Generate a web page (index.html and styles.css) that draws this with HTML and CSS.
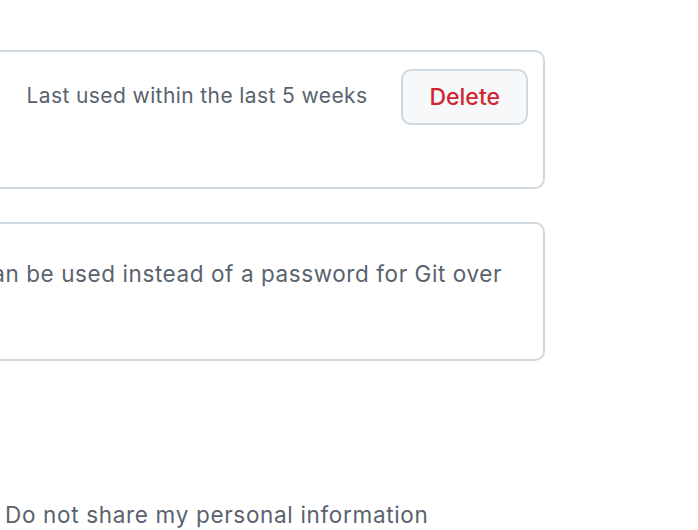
FILE: index.html
```html
<!DOCTYPE html>
<html lang="en">
<head>
<meta charset="utf-8">
<title>Personal access tokens</title>
<link rel="stylesheet" href="styles.css">
</head>
<body>
<main class="page">
  <section class="box token">
    <div class="token-main">
      <a class="token-name" href="#">deploy-token</a>
      <span class="token-scopes">— repo, workflow</span>
    </div>
    <div class="token-meta">
      <span class="last-used">Last used within the last 5 weeks</span>
      <button class="btn-danger" type="button">Delete</button>
    </div>
  </section>
  <section class="box info">
    <p>Personal access tokens (classic) function like ordinary OAuth access tokens. They can be used instead of a password for Git over HTTPS, or can be used to authenticate to the API over Basic Authentication.</p>
  </section>
</main>
<footer class="footer">
  <a class="footer-link" href="#">Do not share my personal information</a>
</footer>
</body>
</html>
```
FILE: styles.css
```css
html, body {
  margin: 0;
  padding: 0;
  background: #ffffff;
  overflow: hidden;
}

body {
  font-family: Inter, "Noto Sans", "Liberation Sans", sans-serif;
  color: #59636e;
}

.page {
  width: 1523px;
  margin-left: -978px;
  padding-top: 50px;
}

.box {
  box-sizing: border-box;
  height: 139px;
  border: 2px solid #d1d9e0;
  border-radius: 10px;
  background: #ffffff;
}

.token {
  display: flex;
  justify-content: space-between;
  align-items: flex-start;
  padding: 17px 15px 15px 27px;
}

.token-main {
  padding-top: 12px;
  font-size: 22px;
  line-height: 30px;
}

.token-name {
  color: #0969da;
  font-weight: 600;
  text-decoration: none;
}

.token-meta {
  display: flex;
  align-items: flex-start;
  gap: 34px;
}

.last-used {
  margin-top: 12px;
  font-size: 21px;
  letter-spacing: 0.4px;
  line-height: 30px;
  color: #59636e;
}

.btn-danger {
  box-sizing: border-box;
  height: 56px;
  padding: 0 26px;
  border: 2px solid #d1d9e0;
  border-radius: 10px;
  background: #f6f8fa;
  color: #d1242f;
  font-family: Inter, "Noto Sans", "Liberation Sans", sans-serif;
  font-size: 23px;
  font-weight: 500;
  line-height: 52px;
  cursor: pointer;
}

.info {
  margin-top: 33px;
  padding: 33px 27px 31px;
}

.info p {
  margin: 0;
  font-size: 22.5px;
  letter-spacing: 0.58px;
  line-height: 33px;
}

.footer {
  padding: 139px 0 0 5px;
  font-size: 22.5px;
  letter-spacing: 0.67px;
  line-height: 30px;
}

.footer-link {
  color: #59636e;
  text-decoration: none;
}
```
